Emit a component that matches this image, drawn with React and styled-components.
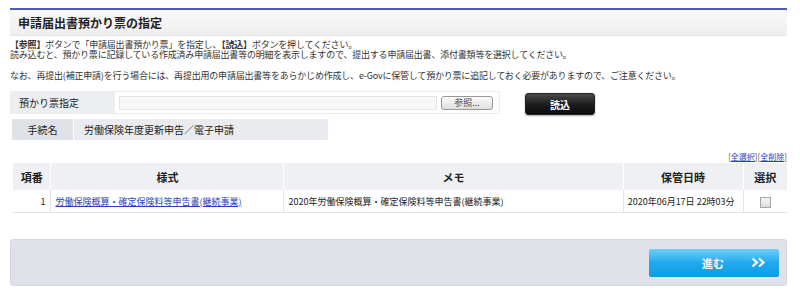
import styled, { createGlobalStyle } from "styled-components";

const GlobalStyle = createGlobalStyle`
  html, body {
    margin: 0;
    padding: 0;
    background: #fff;
  }
  body {
    font-family: "Noto Sans CJK JP", "Noto Sans", sans-serif;
    color: #222;
  }
`;

const Page = styled.div`
  width: 800px;
  padding: 8px 13px 0 10px;
  box-sizing: border-box;
`;

const TitleBar = styled.div`
  border-top: 2px solid #4f5bb5;
  height: 25px;
  background: linear-gradient(#fafafa, #eeeeee);
  border-bottom: 1px solid #e4e4e4;
  display: flex;
  align-items: center;
  padding-left: 8px;
  font-size: 12px;
  font-weight: bold;
  color: #222;
`;

const Notes = styled.div`
  padding: 4px 0 0 0;
  font-size: 9px;
  color: #333;
  letter-spacing: -0.2px;
`;

const Line = styled.p`
  margin: 0;
  line-height: 10px;
  margin-top: ${(p) => p.mt || 0}px;
  white-space: nowrap;
`;

const FileRow = styled.div`
  margin-top: 9px;
  display: flex;
  align-items: center;
`;

const FileBox = styled.div`
  display: flex;
  width: 490px;
  height: 23px;
  border: 1px solid #ececec;
  box-sizing: border-box;
`;

const RowLabel = styled.div`
  width: 104px;
  background: #eceef1;
  display: flex;
  align-items: center;
  padding-left: 8px;
  font-size: 10px;
  box-sizing: border-box;
`;

const FileField = styled.div`
  flex: 1;
  display: flex;
  align-items: center;
  padding: 0 6px 0 0;
  margin-left: 4px;
  background: #fff;
`;

const Track = styled.div`
  flex: 1;
  height: 12px;
  margin-right: 4px;
  border: 1px solid #e6e6e6;
  background: #f8f8f8;
`;

const BrowseButton = styled.button`
  width: 52px;
  height: 14px;
  border: 1px solid #999;
  border-radius: 3px;
  background: linear-gradient(#fbfbfb, #dedede);
  font-family: inherit;
  font-size: 9px;
  color: #444;
  padding: 0;
  line-height: 12px;
`;

const LoadButton = styled.button`
  margin-left: 25px;
  width: 70px;
  height: 22px;
  margin-top: 3px;
  border: 1px solid #222;
  border-radius: 3px;
  background: linear-gradient(#4a4a4a, #1a1a1a 55%, #0c0c0c);
  color: #fff;
  font-family: inherit;
  font-weight: bold;
  font-size: 10px;
  box-shadow: 0 1px 2px rgba(0, 0, 0, 0.35);
  padding: 0;
`;

const ProcRow = styled.div`
  margin-top: 4px;
  display: flex;
  width: 316px;
  height: 21px;
  margin-left: 2px;
  font-size: 10px;
`;

const ProcLabel = styled.div`
  width: 61px;
  background: #dfe2e6;
  display: flex;
  align-items: center;
  justify-content: center;
`;

const ProcValue = styled.div`
  flex: 1;
  background: #e9ebee;
  border-left: 1px solid #fff;
  display: flex;
  align-items: center;
  padding-left: 10px;
`;

const LinkBar = styled.div`
  margin-top: 11px;
  display: flex;
  justify-content: flex-end;
  font-size: 8px;
  color: #444;
  height: 12px;
  line-height: 12px;
`;

const SmallLink = styled.a`
  color: #2a3fc0;
  text-decoration: underline;
`;

const Table = styled.table`
  width: 775px;
  margin-left: 2px;
  border-collapse: collapse;
  font-size: 9px;
`;

const Th = styled.th`
  background: #eef0f3;
  height: 27px;
  font-size: 11px;
  font-weight: bold;
  text-align: center;
  border-left: 1px solid #fff;
  width: ${(p) => p.w}px;
  padding: 0;
  color: #222;
`;

const Td = styled.td`
  height: 22px;
  border-left: 1px solid #e3e5e8;
  border-bottom: 1px solid #e3e5e8;
  text-align: ${(p) => p.align || "left"};
  padding: 0 ${(p) => p.pr ?? 4}px 0 ${(p) => p.pl ?? 4}px;
  white-space: nowrap;
  &:first-child {
    border-left: none;
  }
`;

const RowLink = styled.a`
  color: #2a3fc0;
  text-decoration: underline;
`;

const Check = styled.span`
  display: inline-block;
  width: 9px;
  height: 9px;
  border: 1px solid #a7a7a7;
  background: linear-gradient(#f4f4f4, #dcdcdc);
  vertical-align: middle;
`;

const Footer = styled.div`
  margin-top: 26px;
  height: 45px;
  border-radius: 3px;
  border: 1px solid #d4d8de;
  background: #dfe2e8;
  display: flex;
  align-items: center;
  justify-content: flex-end;
  padding-right: 7px;
`;

const NextButton = styled.button`
  width: 130px;
  height: 28px;
  border: none;
  border-radius: 2px;
  background: linear-gradient(#6cd0fb, #21a9ee 50%, #0e9be6);
  color: #fff;
  font-family: inherit;
  font-weight: bold;
  font-size: 11px;
  display: flex;
  align-items: center;
  padding: 0 0 0 53px;
  gap: 27px;
`;

function Chevrons() {
  return (
    <svg width="15" height="11" viewBox="0 0 15 11" fill="none">
      <path
        d="M1.5 1.5 L6 5.5 L1.5 9.5 M8 1.5 L12.5 5.5 L8 9.5"
        stroke="#fff"
        strokeWidth="2.2"
        strokeLinejoin="miter"
      />
    </svg>
  );
}

export default function App() {
  return (
    <Page>
      <GlobalStyle />
      <TitleBar>申請届出書預かり票の指定</TitleBar>
      <Notes>
        <Line>
          <b>【参照】</b>ボタンで「申請届出書預かり票」を指定し、<b>【読込】</b>ボタンを押してください。
        </Line>
        <Line>
          読み込むと、預かり票に記録している作成済み申請届出書等の明細を表示しますので、提出する申請届出書、添付書類等を選択してください。
        </Line>
        <Line mt={11}>
          なお、再提出(補正申請)を行う場合には、再提出用の申請届出書等をあらかじめ作成し、e-Govに保管して預かり票に追記しておく必要がありますので、ご注意ください。
        </Line>
      </Notes>

      <FileRow>
        <FileBox>
          <RowLabel>預かり票指定</RowLabel>
          <FileField>
            <Track />
            <BrowseButton>参照...</BrowseButton>
          </FileField>
        </FileBox>
        <LoadButton>読込</LoadButton>
      </FileRow>

      <ProcRow>
        <ProcLabel>手続名</ProcLabel>
        <ProcValue>労働保険年度更新申告／電子申請</ProcValue>
      </ProcRow>

      <LinkBar>
        [<SmallLink>全選択</SmallLink>][<SmallLink>全削除</SmallLink>]
      </LinkBar>

      <Table>
        <thead>
          <tr>
            <Th w={38}>項番</Th>
            <Th w={233}>様式</Th>
            <Th w={341}>メモ</Th>
            <Th w={119}>保管日時</Th>
            <Th w={44}>選択</Th>
          </tr>
        </thead>
        <tbody>
          <tr>
            <Td align="right" pr={5}>1</Td>
            <Td>
              <RowLink>労働保険概算・確定保険料等申告書(継続事業)</RowLink>
            </Td>
            <Td>2020年労働保険概算・確定保険料等申告書(継続事業)</Td>
            <Td>2020年06月17日 22時03分</Td>
            <Td align="center">
              <Check />
            </Td>
          </tr>
        </tbody>
      </Table>

      <Footer>
        <NextButton>
          進む
          <Chevrons />
        </NextButton>
      </Footer>
    </Page>
  );
}
